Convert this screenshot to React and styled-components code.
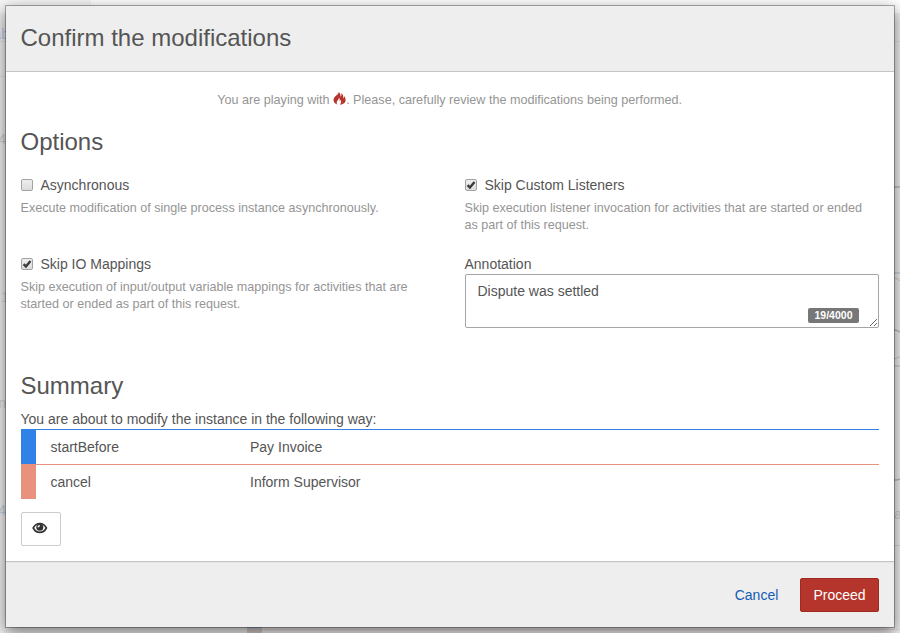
import React from "react";
import styled, { createGlobalStyle } from "styled-components";

const GlobalStyle = createGlobalStyle`
  * { box-sizing: border-box; }
  html, body { margin: 0; height: 100%; overflow: hidden; }
  body {
    background: #f2f2f2;
    color: #555;
    font: 14px/20px "Liberation Sans", Arial, sans-serif;
  }
`;

const Screen = styled.div`
  display: grid;
  height: 633px;
  overflow: hidden;

  > * { grid-area: 1 / 1; }
`;

const Backdrop = styled.div`
  display: flex;
  flex-direction: column;
  background: #f2f2f2;
`;

const TopStrip = styled.div`
  height: 13px;
  background: #fff;
`;

const Tab = styled.div`
  width: 91px;
  height: 13px;
  background: #f7f7f7;
`;

const PageColumns = styled.div`
  display: flex;
  flex: 1;
  justify-content: space-between;
`;

const PageColumn = styled.div`
  display: flex;
  flex-direction: column;
  width: 6px;
`;

const Cell = styled.div`
  display: flex;
  align-items: flex-end;
  justify-content: ${(p) => p.$align || "flex-end"};
  height: ${(p) => p.$h}px;
  line-height: 14px;
  color: ${(p) => p.$color || "#cfcfcf"};
  border-bottom: ${(p) => (p.$line ? `1px solid ${p.$line}` : "0")};
`;

const Clipped = styled.span`
  margin-right: -3px;
`;

const Edges = styled.svg`
  flex: none;
  margin: 0 -7px 31px 0;
`;

const BottomStrip = styled.div`
  display: flex;
  height: 6px;
  padding-left: 247px;
`;

const RowMarker = styled.div`
  width: 15px;
  background: linear-gradient(#c8cedb 0 2px, #d8cdc8 2px);
`;

const RowLine = styled.div`
  flex: 1;
  margin-top: 2px;
  height: 1px;
  background: #edd9d6;
`;

const Dialog = styled.section`
  z-index: 1;
  display: flex;
  flex-direction: column;
  height: 623px;
  margin: 5px;
  background: #fff;
  background-clip: padding-box;
  border: 1px solid rgba(0, 0, 0, 0.3);
  box-shadow: 0 5px 15px rgba(0, 0, 0, 0.5);
`;

const Header = styled.header`
  height: 66px;
  padding: 15px 15px 15px 14.5px;
  background: #eee;
  border-bottom: 1px solid #c4c4c4;
`;

const Title = styled.h3`
  margin: 0;
  font-size: 24px;
  font-weight: 400;
  line-height: 34px;
`;

const Body = styled.div`
  flex: 1;
  padding: 19px 15px 0 14.5px;
`;

const Notice = styled.p`
  height: 18px;
  margin: 0 0 20px;
  font-size: 12.6px;
  line-height: 18px;
  text-align: center;
  color: #959595;
`;

const Heading = styled.h3`
  margin: 0;
  font-size: 24px;
  font-weight: 400;
  line-height: 26px;
`;

const Options = styled.div`
  display: grid;
  grid-template-columns: 414px 414.5px;
  grid-template-rows: 79px 119px;
  column-gap: 30px;
  margin-top: 20px;
`;

const OptionLabel = styled.label`
  display: flex;
  align-items: center;
  height: 20px;
  gap: 8px;
`;

const Check = styled.span`
  display: flex;
  width: 12px;
  height: 12px;
  border: 1px solid #a2a2a2;
  border-radius: 2px;
  background: linear-gradient(#eee, #dcdcdc);
`;

const Help = styled.p`
  margin: 5px 0 0;
  padding-right: 4px;
  font-size: 12.6px;
  line-height: 17px;
  color: #959595;
`;

const Field = styled.div`
  position: relative;
`;

const Annotation = styled.textarea`
  display: block;
  width: 100%;
  height: 54px;
  padding: 6px 12px;
  border: 1px solid #a6a6a6;
  border-radius: 2px;
  color: #555;
  font: inherit;
  outline: 0;
  overflow: hidden;
  resize: vertical;
`;

const Counter = styled.span`
  position: absolute;
  right: 20px;
  top: 54px;
  width: 51px;
  height: 15px;
  border-radius: 2px;
  background: #777;
  color: #fff;
  font-size: 10.5px;
  font-weight: 700;
  line-height: 15px;
  text-align: center;
`;

const Intro = styled.p`
  margin: 10px 0 0;
`;

const Change = styled.div`
  display: grid;
  grid-template-columns: 199.5px 1fr;
  height: 35px;
  padding-left: 15px;
  line-height: 36px;
  border-left: 15px solid ${(p) => p.$color};
  box-shadow: inset 0 1px ${(p) => p.$color};
`;

const Button = styled.button`
  display: inline-flex;
  align-items: center;
  justify-content: center;
  width: ${(p) => p.$w}px;
  height: 34px;
  padding: 0;
  font: inherit;
  border-radius: 2px;
  border: 1px solid transparent;
  background: transparent;
  color: #155cb5;
`;

const PreviewButton = styled(Button)`
  margin-top: 13px;
  padding: 0 1px 2px 0;
  background: #fff;
  border-color: #ccc;
  color: #333;
`;

const ProceedButton = styled(Button)`
  background: #b5352c;
  border-color: #a02a22;
  color: #fff;
`;

const Footer = styled.footer`
  display: flex;
  justify-content: flex-end;
  gap: 8px;
  height: 66px;
  padding: 16px 15px 0;
  background: #eee;
  border-top: 1px solid #c4c4c4;
  box-shadow: inset 0 1px #e5e5e5;
`;

const FireSvg = styled.svg`
  vertical-align: -1px;
`;

const Fire = () => (
  <FireSvg width="13" height="13" viewBox="0 0 13 13" fill="#b5352c">
    <path d="M5.600 0C6 2.800.5 4.200.5 8c0 2.300 1.500 3.800 3.700 4.500C3.300 10.700 3.700 9.400 5 8c.7-.8 1-1.600.9-2.500.9 1.100 1 2.300.6 3.600.7-.2 1.100-.8 1.300-1.400.7 1.800.3 3.500-.9 5 3.400-.3 5.700-1.900 5.700-4.700 0-1.700-.6-3-1.400-4.100.1 1.200-.2 2-.9 2.500.2-2.300-.4-4.200-2-5.300.4 1.800.1 2.800-.6 3.900C7.700 3.200 7.300 1.200 5.600 0z" />
  </FireSvg>
);

const Eye = () => (
  <svg width="16" height="12" viewBox="0 0 16 12">
    <path d="M1.200 6C2.800 3 5 1.500 7.800 1.500S12.800 3 14.400 6c-1.600 2.900-3.800 4.400-6.600 4.400S2.800 8.900 1.200 6z" fill="none" stroke="#333" strokeWidth="1.700" />
    <circle cx="7.800" cy="5.200" r="3.500" fill="#333" />
    <path d="M5.500 5.600c0-1.700.8-2.600 2.300-2.700.2 1.500-.4 2.400-2.300 2.700z" fill="#fff" />
  </svg>
);

const Tick = () => (
  <svg width="10" height="10" viewBox="0 0 10 10" fill="none" stroke="#3b3b3b" strokeWidth="2.400">
    <path d="M1.600 5.200 3.900 7.500 8.500 1.900" />
  </svg>
);

const Option = ({ label, checked, children }) => (
  <div>
    <OptionLabel>
      <Check role="checkbox" aria-checked={!!checked}>{checked && <Tick />}</Check>
      {label}
    </OptionLabel>
    <Help>{children}</Help>
  </div>
);

const changes = [
  { type: "startBefore", activity: "Pay Invoice", color: "#3182e6" },
  { type: "cancel", activity: "Inform Supervisor", color: "#e8917d" },
];

const Page = () => (
  <Backdrop>
    <TopStrip><Tab /></TopStrip>
    <PageColumns>
      <PageColumn>
        <Cell $h={29} $line="#e4e4e4" $color="#c4cdea"><Clipped>ab</Clipped></Cell>
        <Cell $h={35} $line="#e4e4e4" />
        <Cell $h={69}>4</Cell>
        <Cell $h={158} $color="#d3d5dc"><Clipped>:1</Clipped></Cell>
        <Cell $h={106}>n</Cell>
        <Cell $h={107} $color="#c4d3e2">4</Cell>
      </PageColumn>
      <PageColumn>
        <Cell $h={29} $line="#e4e4e4" />
        <Cell $h={479} $align="flex-start">
          <Edges width="7" height="310" fill="none" stroke="#bcbcbc">
            <path d="M0 7h7M0 150q4 0 7 3M0 300h2q3 0 5-2" strokeWidth="1.500" />
            <path d="M0 93h7M0 186h7" stroke="#c4d4e2" strokeWidth="1.500" />
            <path d="M0 98q4 0 7 4M0 179q4-1 7-3" stroke="#ccc" />
          </Edges>
          a
        </Cell>
        <Cell $h={25} $line="#d6d7e6" />
      </PageColumn>
    </PageColumns>
    <BottomStrip><RowMarker /><RowLine /></BottomStrip>
  </Backdrop>
);

export default function App() {
  return (
    <>
      <GlobalStyle />
      <Screen>
        <Page />
        <Dialog role="dialog" aria-label="Confirm the modifications">
          <Header><Title>Confirm the modifications</Title></Header>
          <Body>
            <Notice>You are playing with <Fire />. Please, carefully review the modifications being performed.</Notice>
            <Heading>Options</Heading>
            <Options>
              <Option label="Asynchronous">Execute modification of single process instance asynchronously.</Option>
              <Option label="Skip Custom Listeners" checked>Skip execution listener invocation for activities that are started or ended as part of this request.</Option>
              <Option label="Skip IO Mappings" checked>Skip execution of input/output variable mappings for activities that are started or ended as part of this request.</Option>
              <Field>
                <OptionLabel htmlFor="annotation">Annotation</OptionLabel>
                <Annotation id="annotation" defaultValue="Dispute was settled" />
                <Counter>19/4000</Counter>
              </Field>
            </Options>
            <Heading>Summary</Heading>
            <Intro>You are about to modify the instance in the following way:</Intro>
            {changes.map((c) => (
              <Change key={c.type} $color={c.color}>
                <span>{c.type}</span>
                <span>{c.activity}</span>
              </Change>
            ))}
            <PreviewButton $w={40} aria-label="Preview"><Eye /></PreviewButton>
          </Body>
          <Footer>
            <Button $w={71}>Cancel</Button>
            <ProceedButton $w={79}>Proceed</ProceedButton>
          </Footer>
        </Dialog>
      </Screen>
    </>
  );
}
